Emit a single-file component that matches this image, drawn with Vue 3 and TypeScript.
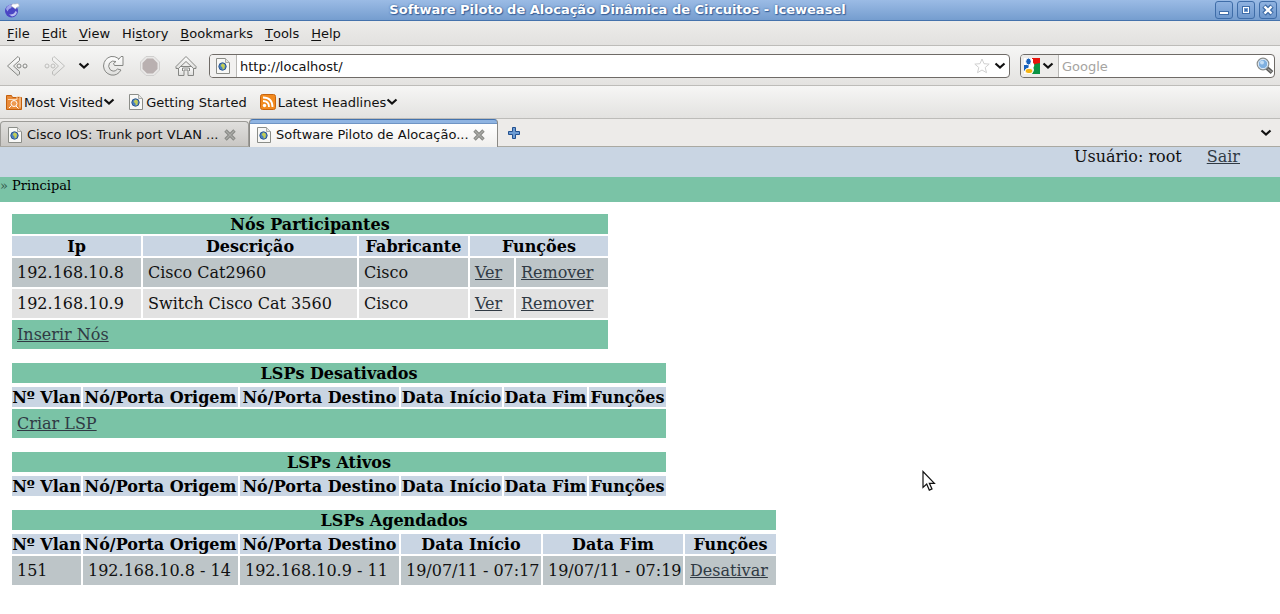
<script setup lang="ts">
import { ref } from 'vue'

interface MenuItem { before: string; key: string; after: string }
interface Schedule { vlan: string; origin: string; target: string; start: string; end: string }

const menus: MenuItem[] = [
  { before: '', key: 'F', after: 'ile' },
  { before: '', key: 'E', after: 'dit' },
  { before: '', key: 'V', after: 'iew' },
  { before: 'Hi', key: 's', after: 'tory' },
  { before: '', key: 'B', after: 'ookmarks' },
  { before: '', key: 'T', after: 'ools' },
  { before: '', key: 'H', after: 'elp' },
]
const tabs: string[] = ['Cisco IOS: Trunk port VLAN ...', 'Software Piloto de Alocação...']
const activeTab = ref(1)
const address = ref('http://localhost/')
const search = ref('')

const nodes = [
  { ip: '192.168.10.8', description: 'Cisco Cat2960', vendor: 'Cisco' },
  { ip: '192.168.10.9', description: 'Switch Cisco Cat 3560', vendor: 'Cisco' },
]
const lspHeads: string[] = ['Nº Vlan', 'Nó/Porta Origem', 'Nó/Porta Destino', 'Data Início', 'Data Fim', 'Funções']
const schedules: Schedule[] = [
  { vlan: '151', origin: '192.168.10.8 - 14', target: '192.168.10.9 - 11', start: '19/07/11 - 07:17', end: '19/07/11 - 07:19' },
]
</script>

<template>
  <div class="window">
    <svg class="defs" width="0" height="0" aria-hidden="true">
      <defs>
        <linearGradient id="metal" x1="0" y1="0" x2="0" y2="1">
          <stop offset="0" stop-color="#fff" /><stop offset="1" stop-color="#dededc" />
        </linearGradient>
        <symbol id="page" viewBox="0 0 16 16">
          <path d="M1.500 .5h9l4 4v11h-13z" fill="#f8f8f6" stroke="#8b8d88" />
          <path d="M10.500 .5v4h4" fill="#e4e4e2" stroke="#a9aaa7" />
          <circle cx="7.500" cy="8.500" r="3.700" fill="#4a80c0" stroke="#2d5791" />
          <path d="M7 5.500q2.500 0 3 2L9.300 11l-1.800.5q.5-1.500-.4-2.500L5.600 8z" fill="#c3cd55" />
        </symbol>
        <symbol id="caret" viewBox="0 0 12 8">
          <path d="M1.500 1.500 6 5.500l4.500-4" fill="none" stroke="#111" stroke-width="2.200" />
        </symbol>
        <symbol id="cross" viewBox="0 0 12 12">
          <path d="m1.500 1.500 9 9m0-9-9 9" stroke="#888985" stroke-width="3.400" />
          <path d="m2 2 8 8m0-8-8 8" stroke="#aaaba7" stroke-width="1.200" />
        </symbol>
      </defs>
    </svg>

    <header class="titlebar">
      <svg class="app-icon" width="16" height="16" viewBox="0 0 16 16" aria-hidden="true">
        <circle cx="7.500" cy="9" r="6.500" fill="#4a45c4" />
        <path d="M2 7q1-4 5-4.500L7.500 6 5 7 3.500 9.500z" fill="#9da3ea" />
        <path d="M5 12.500q5 .5 6.500-3.500l1.500 1q-1 4-5 4.500z" fill="#b9bdf0" />
        <path d="M7 4q1-3 4-2 4-1.500 4 1 1 2-2 2l-1.500 2-2-1.500z" fill="#fff" stroke="#b7b7c4" stroke-width=".6" />
      </svg>
      <h1>Software Piloto de Alocação Dinâmica de Circuitos - Iceweasel</h1>
      <div class="controls">
        <button type="button" aria-label="Minimizar">
          <svg width="16" height="16" viewBox="0 0 16 16"><rect x="3" y="9" width="10" height="4" fill="#3f6da8" /><rect x="4" y="10" width="8" height="2" fill="#fff" /></svg>
        </button>
        <button type="button" aria-label="Maximizar">
          <svg width="16" height="16" viewBox="0 0 16 16"><rect x="4" y="4" width="8" height="8" fill="#3f6da8" /><rect x="5.500" y="5.500" width="5" height="5" fill="#6f9bd2" stroke="#fff" /><rect x="7" y="7" width="2" height="2" fill="#3f6da8" /></svg>
        </button>
        <button type="button" aria-label="Fechar">
          <svg width="16" height="16" viewBox="0 0 16 16"><path d="m4 4 8 8m0-8-8 8" stroke="#3f6da8" stroke-width="5" /><path d="m4.500 4.500 7 7m0-7-7 7" stroke="#fff" stroke-width="2.400" /></svg>
        </button>
      </div>
    </header>

    <nav class="menubar">
      <button v-for="m in menus" :key="m.before + m.key + m.after" type="button">{{ m.before }}<u>{{ m.key }}</u>{{ m.after }}</button>
    </nav>

    <div class="toolbar">
      <div class="tools">
        <button type="button" aria-label="Voltar">
          <svg width="24" height="24" viewBox="0 0 24 24" fill="url(#metal)" stroke="#858683">
            <path d="M12 2.500 1.500 12 12 21.500l1.500-1.500V17.500L7.500 12l6-5.500V4z" />
            <circle cx="13" cy="12" r="2" /><circle cx="19" cy="12" r="2" />
          </svg>
        </button>
        <button type="button" class="faded" aria-label="Avançar" disabled>
          <svg width="24" height="24" viewBox="0 0 24 24" fill="url(#metal)" stroke="#858683">
            <path d="m12 2.500 10.500 9.500L12 21.500 10.500 20v-2.500l6-5.500-6-5.500V4z" />
            <circle cx="5" cy="12" r="2" /><circle cx="11" cy="12" r="2" />
          </svg>
        </button>
        <button type="button" aria-label="Histórico"><svg width="12" height="8"><use href="#caret" /></svg></button>
        <button type="button" aria-label="Recarregar">
          <svg width="24" height="24" viewBox="0 0 24 24" fill="url(#metal)" stroke="#858683">
            <path d="M16.500 5.500 19 2.500h2v9h-8.500l-1-2 2.500-2q-4-1.500-6.500 1.500-2 3.500.5 6.500 4 3.500 7.500-.5l3.500 1q-3.500 6-10 5-7-2-7.500-9 .5-7.500 7.500-9.500 4-.5 7.500 2z" />
          </svg>
        </button>
        <button type="button" aria-label="Parar">
          <svg width="24" height="24" viewBox="0 0 24 24">
            <path d="M8 2.500h8L21.500 8v8L16 21.500H8L2.500 16V8z" fill="#e9e8e7" stroke="#d0cfce" />
            <path d="M9 4.500h6L19.500 9v6L15 19.500H9L4.500 15V9z" fill="#b9b0b0" />
          </svg>
        </button>
        <button type="button" aria-label="Página inicial">
          <svg width="24" height="24" viewBox="0 0 24 24" fill="url(#metal)" stroke="#858683">
            <path d="M4.500 12.500h15v9h-5.500v-5.500h-4v5.500H4.500z" />
            <path d="M12 2.500 2 12.500v2h2.500L12 7.500l7.500 7H22v-2z" />
            <path d="M8.500 17v-3h7v3" fill="none" />
          </svg>
        </button>
      </div>

      <div class="field address">
        <span class="identity"><svg width="16" height="16"><use href="#page" /></svg></span>
        <input v-model="address" type="text" aria-label="Endereço" />
        <button type="button" aria-label="Favoritar">
          <svg width="16" height="16" viewBox="0 0 16 16"><path d="m8 1 2 4.700 5.200.4-4 3.400 1.300 5.200L8 12l-4.500 2.700 1.300-5.200-4-3.400L6 5.700z" fill="#fff" stroke="#d0d0d0" /></svg>
        </button>
        <button type="button" aria-label="Mostrar endereços"><svg width="12" height="8"><use href="#caret" /></svg></button>
      </div>

      <div class="field search">
        <button type="button" class="engine" aria-label="Mecanismo de busca">
          <svg width="16" height="16" viewBox="0 0 16 16">
            <path d="M0 0h16v16H0z" fill="#fff" /><path d="M8 0h8v7H8z" fill="#e8140c" /><path d="M16 5v11H8l2-4-1-4 2-2z" fill="#0b9444" />
            <path d="M0 7h5l-1 4-4 2z" fill="#1761bd" />
            <ellipse cx="4.500" cy="3.500" rx="2.800" ry="3.500" fill="#1761bd" stroke="#fff" />
            <path d="M8 1v4q3 3-1 5" fill="none" stroke="#fff" stroke-width="2" />
            <ellipse cx="5" cy="13" rx="4" ry="2.700" fill="#f5b414" stroke="#fff" />
          </svg>
          <svg width="12" height="8"><use href="#caret" /></svg>
        </button>
        <input v-model="search" type="text" placeholder="Google" aria-label="Buscar" />
        <button type="button" aria-label="Pesquisar">
          <svg width="18" height="18" viewBox="0 0 18 18">
            <path d="m11 11 5 4.500" stroke="#5b5b59" stroke-width="4" /><path d="m12 12 3.500 3" stroke="#999" stroke-width="1.500" />
            <circle cx="7" cy="7" r="5.800" fill="#7fb0e0" stroke="#8a8c89" stroke-width="1.200" /><circle cx="7" cy="7" r="4.700" fill="none" stroke="#e7eef5" />
            <circle cx="6" cy="5.500" r="2" fill="#c4def5" />
          </svg>
        </button>
      </div>
    </div>

    <nav class="bookmarks">
      <button type="button">
        <svg width="16" height="16" viewBox="0 0 16 16">
          <path d="M.5 1.500h5l1 2h9v12H.5z" fill="#e98b3a" stroke="#c4600d" /><path d="M2 5.500h9V2.500h3v11" fill="none" stroke="#fbd9b5" />
          <circle cx="8" cy="9.500" r="3" fill="#ee9a52" stroke="#fff" /><path d="m10 12 2.500 2.500M3 14l2-2" stroke="#fff" />
        </svg>
        <span>Most Visited</span><svg width="12" height="8"><use href="#caret" /></svg>
      </button>
      <button type="button"><svg width="16" height="16"><use href="#page" /></svg><span>Getting Started</span></button>
      <button type="button">
        <svg width="16" height="16" viewBox="0 0 16 16">
          <rect x=".5" y=".5" width="15" height="15" rx="2" fill="#f28a1e" stroke="#c8640d" />
          <circle cx="4.500" cy="11.500" r="1.700" fill="#fff" /><path d="M3 7q6 0 6 6M3 3.500q9.500 0 9.500 9.500" fill="none" stroke="#fff" stroke-width="1.800" />
        </svg>
        <span>Latest Headlines</span><svg width="12" height="8"><use href="#caret" /></svg>
      </button>
    </nav>

    <div class="tabstrip">
      <div v-for="(t, i) in tabs" :key="t" class="tab" :class="{ active: i === activeTab }">
        <button type="button" class="pick" @click="activeTab = i"><svg width="16" height="16"><use href="#page" /></svg><span>{{ t }}</span></button>
        <button type="button" aria-label="Fechar aba"><svg width="12" height="12"><use href="#cross" /></svg></button>
      </div>
      <button type="button" class="new" aria-label="Nova aba">
        <svg width="12" height="12" viewBox="0 0 12 12"><path d="M4.500 .5h3v4h4v3h-4v4h-3v-4h-4v-3h4z" fill="#6c9bd3" stroke="#23508f" /></svg>
      </button>
      <button type="button" class="all" aria-label="Listar abas"><svg width="12" height="8"><use href="#caret" /></svg></button>
    </div>

    <main class="page">
      <div class="userbar"><span>Usuário: root</span><a href="#sair">Sair</a></div>
      <div class="crumbs"><span class="mark">»</span> Principal</div>
      <div class="content">
        <table class="nodes">
          <caption>Nós Participantes</caption>
          <thead>
            <tr><th class="ip">Ip</th><th class="desc">Descrição</th><th class="vendor">Fabricante</th><th colspan="2">Funções</th></tr>
          </thead>
          <tbody>
            <tr v-for="(n, i) in nodes" :key="n.ip" :class="{ light: i % 2 === 1 }">
              <td>{{ n.ip }}</td><td>{{ n.description }}</td><td>{{ n.vendor }}</td>
              <td class="view"><a href="#ver">Ver</a></td><td class="remove"><a href="#remover">Remover</a></td>
            </tr>
          </tbody>
          <tfoot><tr><td colspan="5"><a href="#inserir">Inserir Nós</a></td></tr></tfoot>
        </table>

        <table class="lsp">
          <caption>LSPs Desativados</caption>
          <thead><tr><th v-for="h in lspHeads" :key="h">{{ h }}</th></tr></thead>
          <tfoot><tr><td colspan="6"><a href="#criar">Criar LSP</a></td></tr></tfoot>
        </table>

        <table class="lsp">
          <caption>LSPs Ativos</caption>
          <thead><tr><th v-for="h in lspHeads" :key="h">{{ h }}</th></tr></thead>
        </table>

        <table class="lsp scheduled">
          <caption>LSPs Agendados</caption>
          <thead><tr><th v-for="h in lspHeads" :key="h">{{ h }}</th></tr></thead>
          <tbody>
            <tr v-for="s in schedules" :key="s.vlan">
              <td>{{ s.vlan }}</td><td>{{ s.origin }}</td><td>{{ s.target }}</td>
              <td class="date">{{ s.start }}</td><td class="date">{{ s.end }}</td>
              <td><a href="#desativar">Desativar</a></td>
            </tr>
          </tbody>
        </table>
      </div>
    </main>

    <svg class="pointer" width="14" height="22" viewBox="0 0 14 22" aria-hidden="true">
      <path d="M1 1.500v16l3.700-3.400 2.600 6 2.700-1.200-2.600-5.600h5z" fill="#fff" stroke="#111" stroke-width="1.200" />
    </svg>
  </div>
</template>

<style>
body { margin: 0; background: #fff; }
</style>

<style scoped>
.window { position: relative; font: 13px/16px "DejaVu Sans", sans-serif; color: #111; }
.defs { position: absolute; }
svg { display: block; flex: none; }
button { display: flex; align-items: center; justify-content: center; padding: 0; border: 0; background: none; color: inherit; font: inherit; white-space: nowrap; }

.titlebar { display: flex; align-items: center; height: 20px; padding: 0 3px 0 4px; border-bottom: 1px solid #4472ac; background: linear-gradient(#9bbbe5, #759dcf); }
.titlebar h1 { flex: 1; margin: 0; text-align: center; font-size: 13px; line-height: 16px; color: #fff; text-shadow: 0 0 2px #365f98, 1px 1px 1px #365f98; white-space: nowrap; }
.controls { display: flex; gap: 4px; }
.controls button { box-sizing: border-box; width: 18px; height: 18px; border: 1px solid #3f6da8; border-radius: 3px; background: linear-gradient(#8fb2e0, #6e98cd); }

.menubar { display: flex; gap: 12px; box-sizing: border-box; height: 25px; padding: 2px 7px 0; border-bottom: 1px solid #bdbcb9; background: linear-gradient(#edecea, #e2e1df); }
.menubar u { text-underline-offset: 2px; }

.toolbar { display: flex; align-items: center; gap: 10px; height: 39px; padding: 0 5px 0 6px; border-bottom: 1px solid #bdbcb9; background: linear-gradient(#f6f6f5, #e3e2e0); }
.tools { display: flex; align-items: center; gap: 12px; width: 193px; }
.faded { opacity: .45; }
.field { display: flex; align-items: center; box-sizing: border-box; height: 24px; border: 1px solid #6f6b67; border-radius: 4px; background: #fff; overflow: hidden; }
.field input { flex: 1; min-width: 0; box-sizing: border-box; height: 22px; padding: 2px 3px 0; border: 0; outline: 0; background: none; font: inherit; color: #111; }
.field input::placeholder { color: #a5a4a1; opacity: 1; }
.address { flex: 1; padding-right: 3px; }
.address button { margin-left: 4px; }
.identity { display: flex; padding: 3px 5px; border-right: 1px solid #b9b8b5; background: #f2f1f0; }
.search { width: 255px; }
.engine { gap: 2px; height: 22px; padding: 0 4px 0 3px; border-right: 1px solid #b9b8b5; background: #edecea; }

.bookmarks { display: flex; gap: 13px; height: 32px; padding: 0 6px; border-bottom: 1px solid #bdbcb9; background: linear-gradient(#f6f6f5, #e3e2e0); }
.bookmarks span { padding: 2px 0 0 2px; }

.tabstrip { display: flex; align-items: stretch; height: 27px; border-bottom: 1px solid #aaa9a2; background: #edebe9; }
.tab { display: flex; align-items: center; box-sizing: border-box; width: 249px; margin-top: 2px; padding: 2px 12px 0 6px; border: 1px solid #9c9b97; border-bottom: 0; border-radius: 4px 4px 0 0; background: linear-gradient(#e0dfdd, #c9c7c4); }
.tab.active { margin: 0 0 -1px; border-color: #8a8985; border-top: 1px solid #4472ac; background: linear-gradient(#8fb4e2 0 3px, #6f94c4 3px 4px, #fff 4px, #f0efed); }
.pick { flex: 1; justify-content: flex-start; gap: 4px; }
.new { width: 32px; }
.all { margin-left: auto; width: 28px; }

.page { font-family: "DejaVu Serif", serif; font-size: 16px; line-height: 19px; }
.page a { color: #303a44; }
.userbar { display: flex; justify-content: flex-end; gap: 25px; height: 30px; padding-right: 40px; background: #c9d5e3; color: #111; }
.crumbs { height: 25px; background: #7ac3a6; font-size: 13px; line-height: 18px; color: #000; }
.mark { color: #33584b; }
.content { padding: 12px 10px; }
table { border-spacing: 2px; margin-bottom: 12px; }
caption { margin: 0 2px; background: #7ac3a6; }
th { background: #c9d5e3; white-space: nowrap; }
caption, th { padding: 2px 0 0; color: #000; font-size: 16px; font-weight: 700; line-height: 18px; }
.lsp caption { margin-bottom: 2px; }
td { padding: 5px; background: #bdc5c8; white-space: nowrap; }
.date { padding-right: 1px; }
.light td { background: #e2e2e2; }
tfoot td { background: #7ac3a6; }
.ip { width: 129px; }
.desc { width: 214px; }
.vendor { width: 109px; }
.view { width: 34px; }
.remove { width: 82px; }
.lsp th:nth-child(1) { width: 69px; }
.lsp th:nth-child(2) { width: 155px; }
.lsp th:nth-child(3) { width: 159px; }
.lsp th:nth-child(4) { width: 101px; }
.lsp th:nth-child(5) { width: 83px; }
.lsp th:nth-child(6) { width: 77px; }
.scheduled th:nth-child(4), .scheduled th:nth-child(5) { width: 140px; }
.scheduled th:nth-child(6) { width: 91px; }
.pointer { position: absolute; left: 922px; top: 470px; }
</style>
